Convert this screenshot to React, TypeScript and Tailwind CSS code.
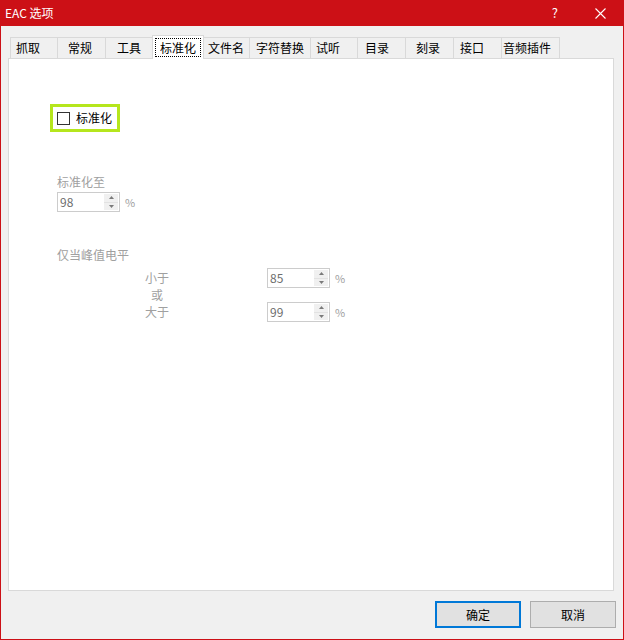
import React from "react";

const font = "font-['Noto_Sans_CJK_SC','Noto_Sans',sans-serif]";

const tabs = [
  { label: "抓取", cls: "w-[48px] pl-[5px]" },
  { label: "常规", cls: "w-[49px] pl-[10px]" },
  { label: "工具", cls: "w-[48px] pl-[11px]" },
  { label: "标准化", cls: "w-[52px] pl-[2px]", active: true },
  { label: "文件名", cls: "w-[47px] pl-[4px]" },
  { label: "字符替换", cls: "w-[62px] pl-[6px]" },
  { label: "试听", cls: "w-[48px] pl-[5px]" },
  { label: "目录", cls: "w-[49px] pl-[7px]" },
  { label: "刻录", cls: "w-[49px] pl-[10px]" },
  { label: "接口", cls: "w-[49px] pl-[6px]" },
  { label: "音频插件", cls: "w-[59px] pl-[1px]" },
];

function Arrow({ up }: { up?: boolean }) {
  return (
    <svg width="5" height="3" viewBox="0 0 5 3" className="block">
      <path d={up ? "M2.5 0L5 3H0Z" : "M0 0H5L2.5 3Z"} fill="#7a7a7a" />
    </svg>
  );
}

/** Disabled spin edit with the small up/down buttons on the right. */
function SpinBox({ value }: { value: string }) {
  return (
    <div className="flex items-center gap-[5px]">
      <div className="flex h-[20px] w-[63px] border border-[#cccccc] bg-white">
        <div className="flex-1 pl-[2px] text-[12px] leading-[18px] text-[#6d6d6d]">{value}</div>
        <div className="my-[1px] mr-[1px] flex w-[14px] flex-col bg-[#f0f0f0]">
          <div className="flex flex-1 items-center justify-center border-b border-[#e2e2e2]">
            <Arrow up />
          </div>
          <div className="flex flex-1 items-center justify-center">
            <Arrow />
          </div>
        </div>
      </div>
      <span className="text-[11px] leading-[14px] text-[#a0a0a0]">%</span>
    </div>
  );
}

export default function App() {
  return (
    <div className={`flex h-[640px] w-[624px] flex-col bg-[#cc1016] px-[1px] pb-[1px] ${font}`}>
      {/* title bar */}
      <div className="flex h-[26px] shrink-0 items-center text-white">
        <span className="pl-[4px] text-[12px] leading-[14px]">EAC 选项</span>
        <span className="ml-auto text-[13px] leading-[14px]">?</span>
        <svg width="11" height="11" viewBox="0 0 11 11" className="ml-[37px] mr-[17px]">
          <path d="M0.5 0.5L10.5 10.5M10.5 0.5L0.5 10.5" stroke="white" strokeWidth="1.1" />
        </svg>
      </div>

      <div className="flex flex-1 flex-col bg-[#f0f0f0] pl-[7px] pt-[9px]">
        {/* tab strip */}
        <div className="ml-[2px] flex h-[23px] items-end">
          {tabs.map((t) =>
            t.active ? (
              <div
                key={t.label}
                className={`relative z-10 -mb-[1px] -ml-[1px] flex h-[24px] items-center border border-b-0 border-[#d9d9d9] bg-white ${t.cls}`}
              >
                <span className="border border-dotted border-black px-[4px] text-[12px] leading-[17px] text-black">
                  {t.label}
                </span>
              </div>
            ) : (
              <div
                key={t.label}
                className={`-ml-[1px] flex h-[21px] items-center border border-b-0 border-[#d9d9d9] bg-[#f0f0f0] text-[12px] leading-[14px] text-black first:ml-0 ${t.cls}`}
              >
                {t.label}
              </div>
            )
          )}
        </div>

        {/* page */}
        <div className="h-[533px] w-[606px] border border-[#d9d9d9] bg-white pl-[41px] pt-[45px]">
          <div className="flex h-[28px] w-[70px] items-center border-[3px] border-[#b5e61d] bg-white pl-[4px]">
            <div className="h-[13px] w-[13px] border border-[#333333] bg-white" />
            <span className="ml-[6px] text-[12px] leading-[14px] text-black">标准化</span>
          </div>

          <div className="pl-[7px]">
            <div className="mt-[43px] text-[12px] leading-[14px] text-[#a0a0a0]">标准化至</div>
            <div className="mt-[3px]">
              <SpinBox value="98" />
            </div>

            <div className="mt-[36px] text-[12px] leading-[14px] text-[#a0a0a0]">仅当峰值电平</div>

            <div className="mt-[6px] flex items-center pl-[88px]">
              <span className="w-[24px] text-center text-[12px] leading-[14px] text-[#a0a0a0]">小于</span>
              <div className="ml-[98px]">
                <SpinBox value="85" />
              </div>
            </div>
            <div className="pl-[88px]">
              <div className="w-[24px] text-center text-[12px] leading-[14px] text-[#a0a0a0]">或</div>
            </div>
            <div className="flex items-center pl-[88px]">
              <span className="w-[24px] text-center text-[12px] leading-[14px] text-[#a0a0a0]">大于</span>
              <div className="ml-[98px]">
                <SpinBox value="99" />
              </div>
            </div>
          </div>
        </div>

        {/* buttons */}
        <div className="mt-[10px] flex justify-end gap-[9px] pr-[7px]">
          <button className="h-[27px] w-[86px] border-2 border-[#0078d7] bg-[#e1e1e1] text-[12px] text-black">
            确定
          </button>
          <button className="h-[27px] w-[86px] border border-[#adadad] bg-[#e1e1e1] text-[12px] text-black">
            取消
          </button>
        </div>
      </div>
    </div>
  );
}
